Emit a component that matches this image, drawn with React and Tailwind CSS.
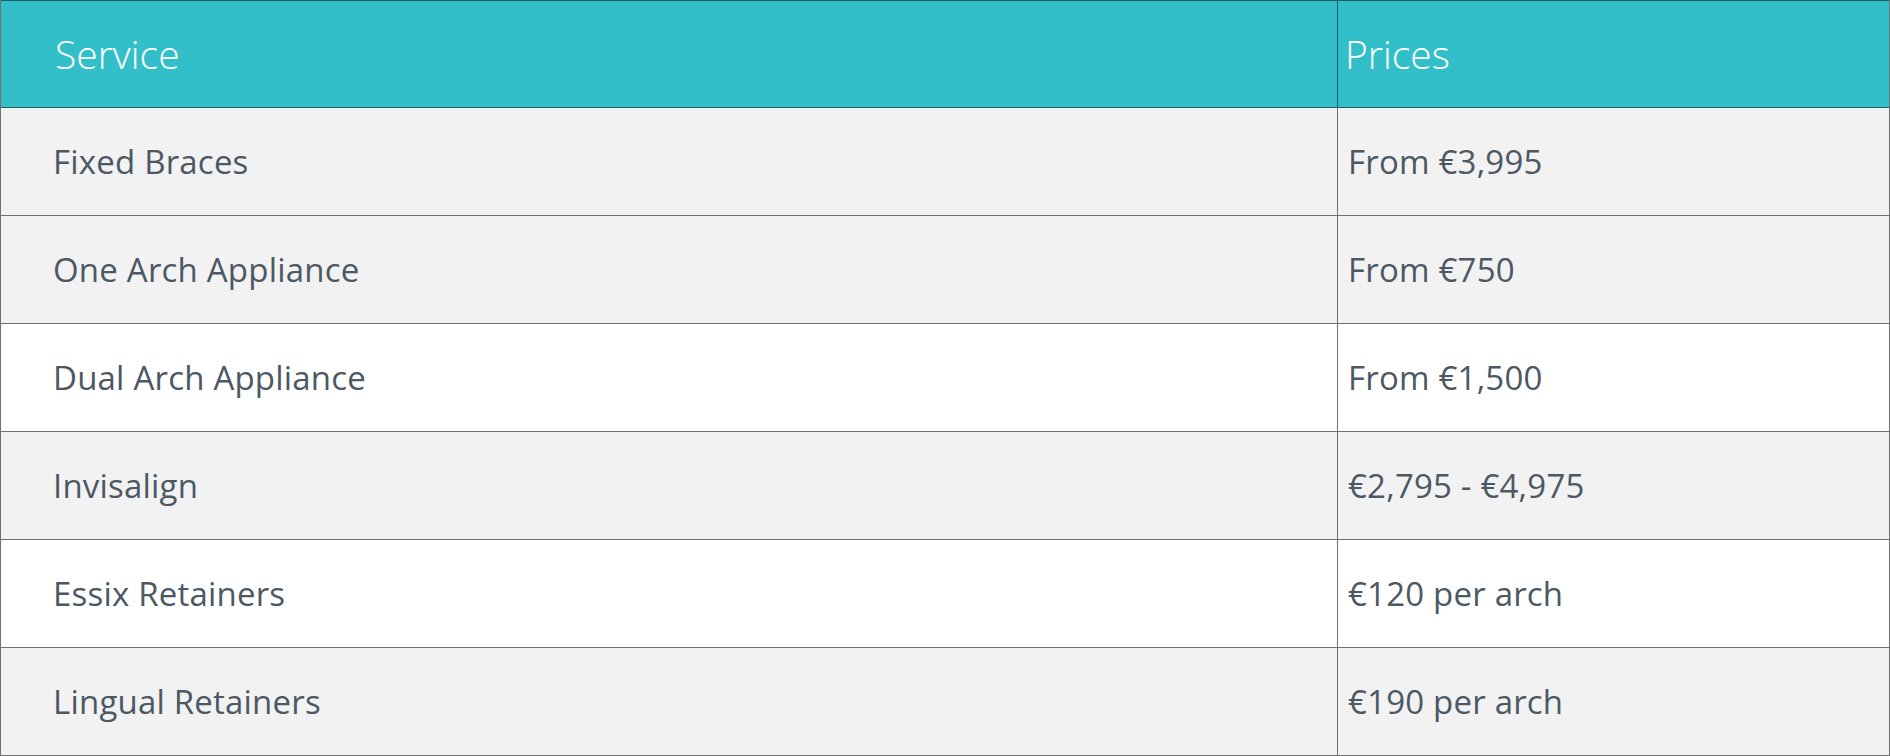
import React from 'react';

const rows = [
  { service: 'Fixed Braces', price: 'From €3,995', shade: true },
  { service: 'One Arch Appliance', price: 'From €750', shade: true },
  { service: 'Dual Arch Appliance', price: 'From €1,500', shade: false },
  { service: 'Invisalign', price: '€2,795 - €4,975', shade: true },
  { service: 'Essix Retainers', price: '€120 per arch', shade: false },
  { service: 'Lingual Retainers', price: '€190 per arch', shade: true },
];

export default function App() {
  return (
    <div className="w-[1890px] h-[756px] bg-white font-['Open_Sans',sans-serif]">
      <div className="border-l border-r border-[#707070]">
        {/* Header */}
        <div className="flex h-[108px] bg-[#33bfca] border-t border-b border-[#1f5e64] text-white font-light text-[39px]">
          <div className="w-[1337px] flex items-center pl-[54px] border-r border-[#1f5e64]">Service</div>
          <div className="flex-1 flex items-center pl-[7px]">Prices</div>
        </div>

        {/* Rows */}
        {rows.map((r) => (
          <div
            key={r.service}
            className={`flex h-[108px] border-b border-[#707070] text-[33px] tracking-[0.2px] text-[#4c5864] ${r.shade ? 'bg-[#f2f2f2]' : 'bg-white'}`}
          >
            <div className="w-[1337px] flex items-center pl-[52px] border-r border-[#707070]">{r.service}</div>
            <div className="flex-1 flex items-center pl-[10px]">{r.price}</div>
          </div>
        ))}
      </div>
    </div>
  );
}
